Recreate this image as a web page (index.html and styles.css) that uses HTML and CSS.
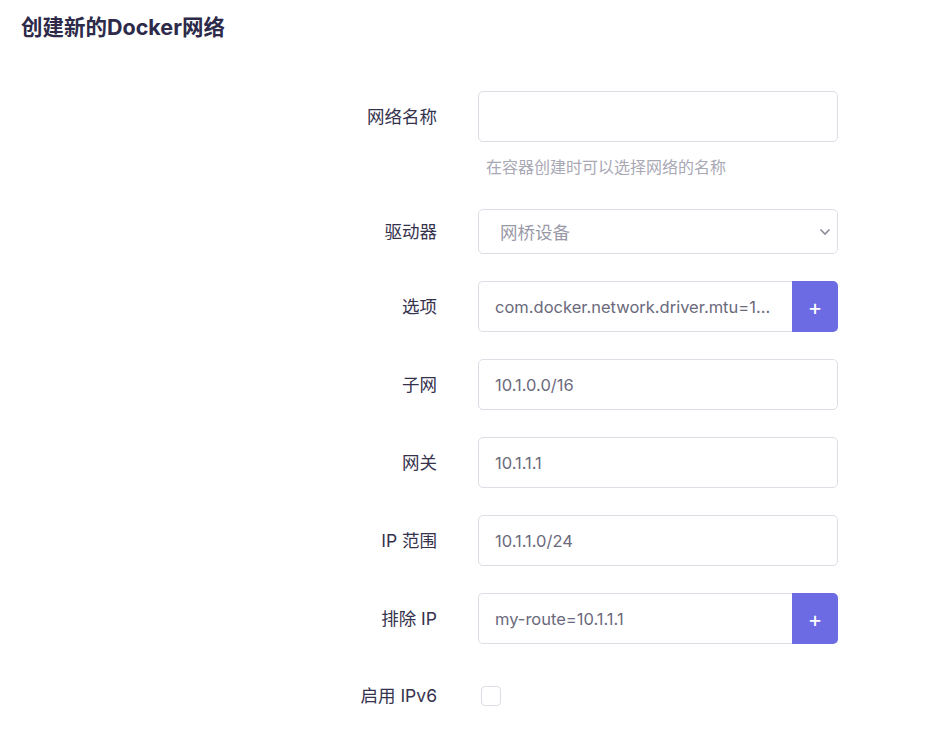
FILE: index.html
```html
<!DOCTYPE html>
<html>
<head>
    <title>创建新的Docker网络</title>
    <meta charset="UTF-8">
    <link rel="stylesheet" href="styles.css">
</head>
<body>
    <h3 class="title">创建新的Docker网络</h3>

    <div class="form">
        <div class="row">
            <label class="label">网络名称</label>
            <div class="field">
                <input type="text" class="input">
                <div class="help">在容器创建时可以选择网络的名称</div>
            </div>
        </div>

        <div class="row select-row">
            <label class="label">驱动器</label>
            <div class="field">
                <div class="select">
                    <span>网桥设备</span>
                    <svg width="12" height="8" viewBox="0 0 12 8"><path d="M1.5 1.5 6 6l4.5-4.5" fill="none" stroke="#8a8d98" stroke-width="1.6"/></svg>
                </div>
            </div>
        </div>

        <div class="row">
            <label class="label">选项</label>
            <div class="field">
                <div class="group">
                    <input type="text" class="input" value="com.docker.network.driver.mtu=1...">
                    <button class="add">+</button>
                </div>
            </div>
        </div>

        <div class="row">
            <label class="label">子网</label>
            <div class="field"><input type="text" class="input" value="10.1.0.0/16"></div>
        </div>

        <div class="row">
            <label class="label">网关</label>
            <div class="field"><input type="text" class="input" value="10.1.1.1"></div>
        </div>

        <div class="row">
            <label class="label">IP 范围</label>
            <div class="field"><input type="text" class="input" value="10.1.1.0/24"></div>
        </div>

        <div class="row">
            <label class="label">排除 IP</label>
            <div class="field">
                <div class="group">
                    <input type="text" class="input" value="my-route=10.1.1.1">
                    <button class="add">+</button>
                </div>
            </div>
        </div>

        <div class="row check-row">
            <label class="label">启用 IPv6</label>
            <div class="field"><span class="checkbox"></span></div>
        </div>
    </div>
</body>
</html>
```

FILE: styles.css
```css
body { margin: 0; padding: 0 21px; font-family: Inter, "Noto Sans CJK SC", sans-serif; color: #33304a; background: #fff; }
.title { margin: 0; padding-top: 13px; font-size: 21.5px; font-weight: 700; line-height: 28px; color: #2d2a4a; }
.form { margin-top: 50px; }
.row { display: flex; align-items: flex-start; margin-bottom: 27px; }
.label { width: 416px; text-align: right; font-size: 17.5px; line-height: 51px; flex-shrink: 0; color: #35324d; }
.field { margin-left: 41px; width: 360px; }
.input { box-sizing: border-box; width: 100%; height: 51px; padding: 0 16px; border: 1px solid #dedde6; border-radius: 5px; font-family: Inter, "Noto Sans CJK SC", sans-serif; font-size: 16.5px; color: #6b6a7c; outline: none; background: #fff; }
.help { margin: 14px 0 4px 8px; font-size: 16px; line-height: 22px; color: #a9a8b5; }
.select-row .label { line-height: 45px; }
.select { box-sizing: border-box; height: 45px; display: flex; align-items: center; justify-content: space-between; padding: 0 6px 0 21px; border: 1px solid #dedde6; border-radius: 5px; font-size: 17.5px; color: #9a99a8; }
.group { display: flex; }
.group .input { border-radius: 5px 0 0 5px; border-right: none; }
.add { width: 46px; flex-shrink: 0; height: 51px; border: none; border-radius: 0 5px 5px 0; background: #6c6be3; color: #fff; font-size: 22px; font-family: Inter, sans-serif; cursor: pointer; }
.check-row { margin-top: 42px; }
.check-row .label { line-height: 20px; }
.checkbox { display: block; box-sizing: border-box; width: 20px; height: 20px; margin-left: 3px; border: 1px solid #dedde6; border-radius: 4px; }
```
